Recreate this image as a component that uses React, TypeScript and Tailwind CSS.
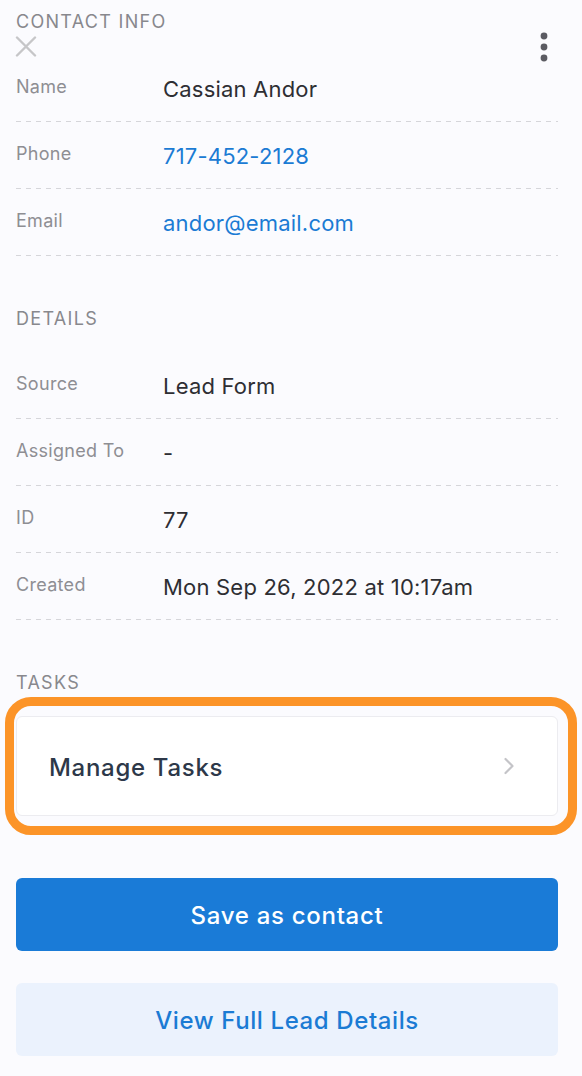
import React from 'react';

const font = { fontFamily: 'Inter, "Noto Sans", sans-serif' };

// 点線の区切り
function Divider() {
	return <div className="h-px w-full bg-[linear-gradient(to_right,#d6d6da_55%,transparent_0)] bg-[length:10px_1px] bg-repeat-x" />;
}

function Row({ label, value, link }: { label: string; value: string; link?: boolean }) {
	return (
		<>
			<div className="flex h-[66px] items-center">
				<div className="w-[147px] -mt-[2px] text-[18px] leading-[22px] tracking-[0.3px] text-[#8e8e93]">{label}</div>
				<div className={`mt-[2px] text-[22px] leading-[26px] tracking-[0.2px] ${link ? 'text-[#1b7bd4]' : 'text-[#2e2e33]'}`}>{value}</div>
			</div>
			<Divider />
		</>
	);
}

function SectionTitle({ title }: { title: string }) {
	return (
		<div className="flex h-[96px] items-end pb-[23px]">
			<div className="text-[18px] leading-[20px] tracking-[1.3px] text-[#88888d]">{title}</div>
		</div>
	);
}

export default function App() {
	return (
		<div className="min-h-[1076px] w-[582px] bg-[#fbfbfe] pl-4 pr-6" style={font}>
			{/* ヘッダー */}
			<div className="pt-[12px] text-[18px] leading-[20px] tracking-[1.3px] text-[#88888d]">CONTACT INFO</div>
			<div className="-mt-px flex h-[24px] items-center justify-between">
				<svg width="22" height="21" viewBox="0 0 22 21" className="-ml-px mt-[7px]">
					<path d="M2 1.5 L20 19.5 M20 1.5 L2 19.5" stroke="#c6c6c8" strokeWidth="2.4" strokeLinecap="round" />
				</svg>
				<svg width="8" height="30" viewBox="0 0 8 30" className="mr-[10px] mt-[8px]">
					<circle cx="4" cy="4" r="3.4" fill="#5b5b62" />
					<circle cx="4" cy="15" r="3.4" fill="#5b5b62" />
					<circle cx="4" cy="26" r="3.4" fill="#5b5b62" />
				</svg>
			</div>

			<Row label="Name" value="Cassian Andor" />
			<Row label="Phone" value="717-452-2128" link />
			<Row label="Email" value="andor@email.com" link />

			<SectionTitle title="DETAILS" />
			<Row label="Source" value="Lead Form" />
			<Row label="Assigned To" value="-" />
			<Row label="ID" value="77" />
			<Row label="Created" value="Mon Sep 26, 2022 at 10:17am" />

			<SectionTitle title="TASKS" />
			{/* タスクカード */}
			<div className="relative">
				<div className="flex h-[100px] items-center justify-between rounded-md border border-[#ececf0] bg-white pl-[32px] pr-[42px]">
					<div className="mt-[4px] text-[24px] font-medium leading-[28px] tracking-[0.7px] text-[#2d3849]">Manage Tasks</div>
					<svg width="12" height="18" viewBox="0 0 12 18">
						<path d="M2.5 2 L9.5 9 L2.5 16" fill="none" stroke="#c4c4c8" strokeWidth="2.2" strokeLinecap="round" strokeLinejoin="round" />
					</svg>
				</div>
				<div className="pointer-events-none absolute -top-[19px] -bottom-[19px] -left-[11px] -right-[19px] rounded-[26px] border-[9px] border-[#fc9428]" />
			</div>

			{/* ボタン */}
			<button className="mt-[62px] flex h-[73px] w-full items-center justify-center rounded-md bg-[#1a7bd7] pt-[3px] text-[24px] font-medium tracking-[0.7px] text-white">
				Save as contact
			</button>
			<button className="mt-[32px] flex h-[73px] w-full items-center justify-center rounded-md bg-[#ebf2fd] pt-[3px] text-[24px] font-medium tracking-[0.6px] text-[#1b7bd4]">
				View Full Lead Details
			</button>
		</div>
	);
}
